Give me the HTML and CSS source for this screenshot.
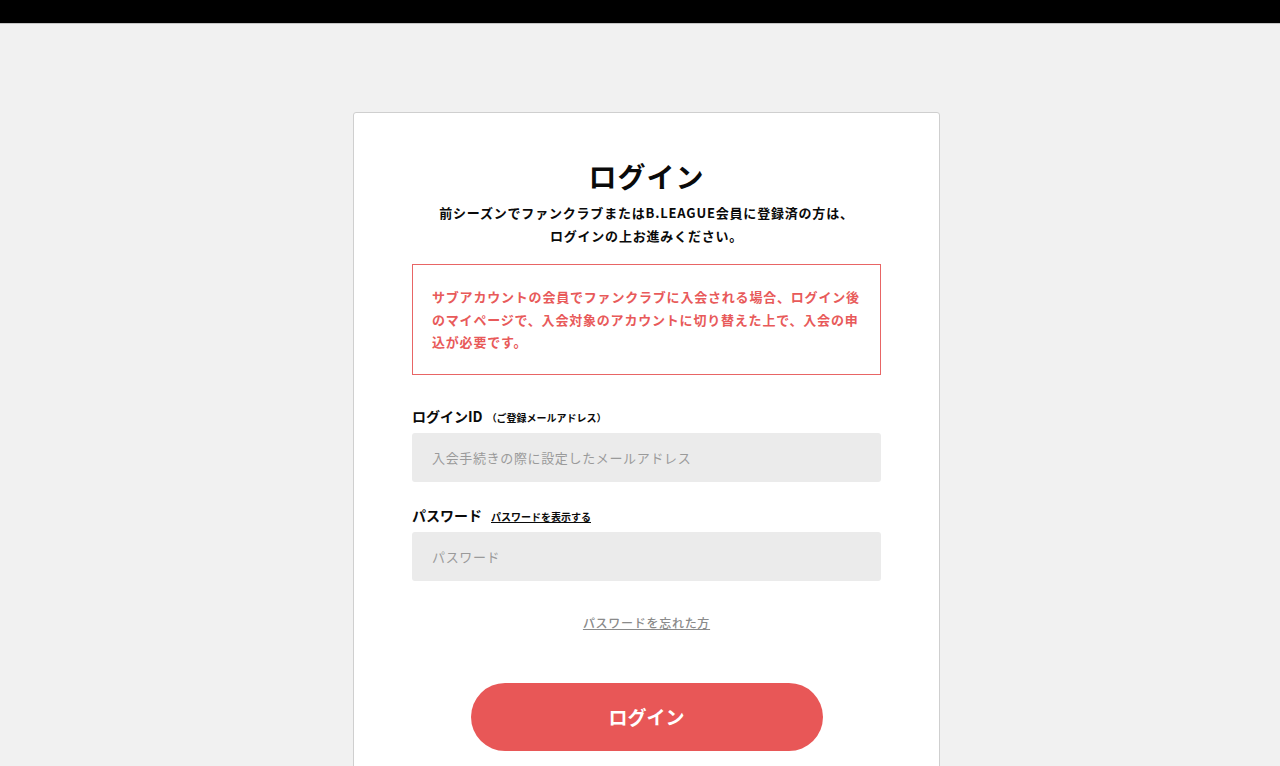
FILE: index.html
```
<!DOCTYPE html>
<html lang="ja">

<head>
    <meta charset="UTF-8" />
    <meta name="viewport" content="width=device-width, initial-scale=1.0" />
    <title>ログイン</title>
    <link rel="stylesheet" href="styles.css">
</head>

<body>

    <div class="topbar"></div>

    <div class="page">
        <div class="login-card">
            <h1>ログイン</h1>
            <p class="lead">前シーズンでファンクラブまたはB.LEAGUE会員に登録済の方は、<br>ログインの上お進みください。</p>

            <div class="notice">
                サブアカウントの会員でファンクラブに入会される場合、ログイン後のマイページで、入会対象のアカウントに切り替えた上で、入会の申込が必要です。
            </div>

            <form class="login-form">
                <label class="field-label" for="loginId">ログインID<span class="sub">（ご登録メールアドレス）</span></label>
                <input type="text" id="loginId" class="field-input" placeholder="入会手続きの際に設定したメールアドレス">

                <label class="field-label" for="password">パスワード<a href="#" class="show-pass">パスワードを表示する</a></label>
                <input type="password" id="password" class="field-input" placeholder="パスワード">

                <div class="forgot">
                    <a href="#">パスワードを忘れた方</a>
                </div>

                <button type="button" class="login-btn">ログイン</button>
            </form>
        </div>
    </div>

</body>

</html>
```

FILE: styles.css
```
body {
    margin: 0;
    font-family: "Noto Sans CJK JP", "Noto Sans", sans-serif;
    background-color: #f1f1f1;
    color: #0a0a0a;
}

.topbar {
    height: 23px;
    background: #000;
    border-bottom: 1px solid #c4c4c4;
}

.page {
    padding: 88px 0 0 13px;
    min-height: 800px;
}

.login-card {
    box-sizing: border-box;
    width: 587px;
    margin: 0 auto;
    background: #fff;
    border: 1px solid #cfcfcf;
    border-radius: 3px;
    padding: 43px 58px 80px;
}

.login-card h1 {
    margin: 0;
    font-size: 28px;
    line-height: 40px;
    letter-spacing: 1px;
    text-align: center;
    font-weight: 700;
}

.lead {
    margin: 5px 0 0;
    font-size: 13px;
    line-height: 23px;
    font-weight: 700;
    letter-spacing: 0.8px;
    text-align: center;
}

.notice {
    margin-top: 17px;
    border: 1px solid #e86565;
    padding: 21px 19px 20px 19px;
    color: #e85a5a;
    font-size: 13px;
    line-height: 22.5px;
    letter-spacing: 0.8px;
    font-weight: 700;
}

.login-form {
    display: flex;
    flex-direction: column;
    padding-top: 31px;
}

.field-label {
    display: flex;
    align-items: baseline;
    height: 20px;
    font-size: 14px;
    line-height: 20px;
    font-weight: 700;
    margin-bottom: 7px;
}

.field-label .sub {
    font-size: 10px;
    margin-left: 4px;
}

.show-pass {
    font-size: 10px;
    color: #0a0a0a;
    margin-left: 9px;
}

.field-input {
    box-sizing: border-box;
    height: 49px;
    border: none;
    border-radius: 3px;
    background: #ebebeb;
    padding: 0 20px;
    font-family: inherit;
    font-size: 13px;
    letter-spacing: 0.05em;
    margin-bottom: 23px;
}

.field-input::placeholder {
    color: #9a9a9a;
}

.forgot {
    text-align: center;
    margin-top: 9px;
    font-size: 12px;
    line-height: 20px;
    letter-spacing: 0.06em;
    font-weight: 500;
}

.forgot a {
    color: #8a8a8a;
}

.login-btn {
    align-self: center;
    width: 352px;
    height: 68px;
    margin-top: 50px;
    border: none;
    border-radius: 34px;
    background: #e85757;
    color: #fff;
    font-family: inherit;
    font-size: 19px;
    font-weight: 700;
    cursor: pointer;
}
```
